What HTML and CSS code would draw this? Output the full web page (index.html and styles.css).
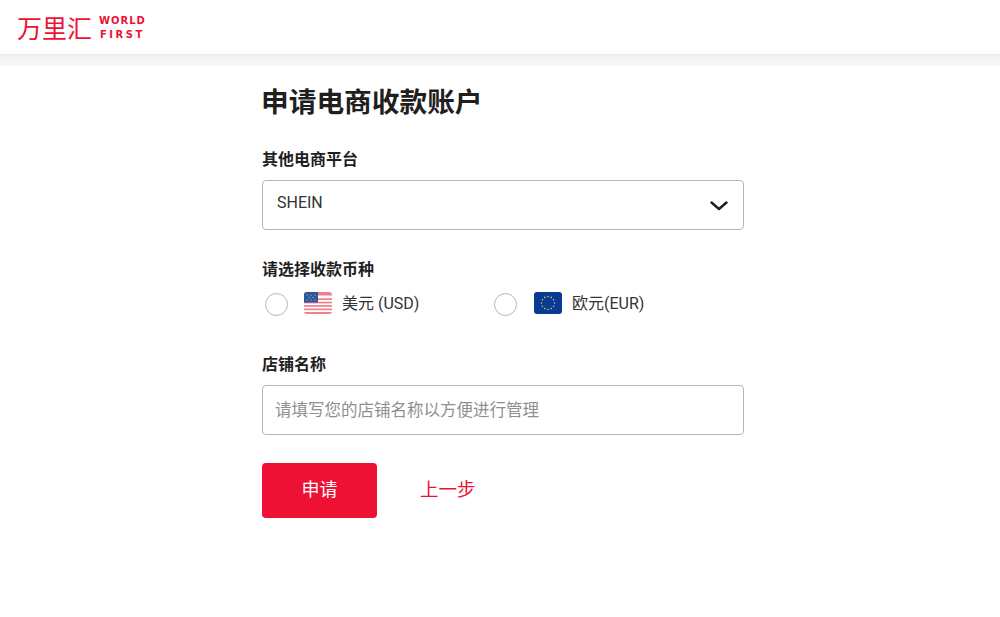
FILE: index.html
```html
<html lang="en">
    <head>
        <meta charset="UTF-8">
        <meta name="viewport" content="width=device-width, initial-scale=1.0">
        <title>万里汇</title>
        <link rel="stylesheet" href="styles.css">
    </head>
    <body>
        <header class="topbar">
            <div class="logo">
                <span class="logo-cn">万里汇</span>
                <div class="logo-en">
                    <div>WORLD</div>
                    <div class="logo-first">FIRST</div>
                </div>
            </div>
        </header>
        <div class="band"></div>
        <main class="content">
            <h1>申请电商收款账户</h1>

            <div class="label first">其他电商平台</div>
            <div class="select">
                <span>SHEIN</span>
                <svg class="chevron" width="18" height="10" viewBox="0 0 18 10">
                    <path d="M1.5 1.5 L9 8 L16.5 1.5" fill="none" stroke="#1f1f1f" stroke-width="2.4" stroke-linecap="round" stroke-linejoin="round"/>
                </svg>
            </div>

            <div class="label currency">请选择收款币种</div>
            <div class="radios">
                <label class="radio usd">
                    <span class="dot"></span>
                    <svg class="flag" width="28" height="22" viewBox="0 0 28 22">
                        <rect width="28" height="22" rx="3" fill="#fff"/>
                        <path d="M0 3 a3 3 0 0 1 3 -3 h22 a3 3 0 0 1 3 3 v0.4 h-28 z" fill="#f07f8b"/>
                        <rect y="6.3" width="28" height="1.7" fill="#f07f8b"/>
                        <rect y="9.7" width="28" height="1.7" fill="#f07f8b"/>
                        <rect y="13.1" width="28" height="1.7" fill="#f07f8b"/>
                        <rect y="16.5" width="28" height="1.7" fill="#f07f8b"/>
                        <path d="M0 19.9 h28 a3 3 0 0 1 -3 2.1 h-22 a3 3 0 0 1 -3 -2.1 z" fill="#f07f8b"/>
                        <path d="M0 3 a3 3 0 0 1 3 -3 h11 v10.5 h-14 z" fill="#2b5797"/>
                        <g fill="#c9d6ea">
                            <circle cx="3" cy="3" r="0.6"/>
                            <circle cx="7" cy="3" r="0.6"/>
                            <circle cx="11" cy="3" r="0.6"/>
                            <circle cx="5" cy="5.5" r="0.6"/>
                            <circle cx="9" cy="5.5" r="0.6"/>
                            <circle cx="3" cy="8" r="0.6"/>
                            <circle cx="7" cy="8" r="0.6"/>
                            <circle cx="11" cy="8" r="0.6"/>
                        </g>
                    </svg>
                    <span>美元 (USD)</span>
                </label>
                <label class="radio eur">
                    <span class="dot"></span>
                    <svg class="flag" width="28" height="22" viewBox="0 0 28 22">
                        <rect width="28" height="22" rx="3" fill="#0a3a94"/>
                        <g fill="#d9c24a">
                            <circle cx="14" cy="4.5" r="0.8"/>
                            <circle cx="17.2" cy="5.4" r="0.8"/>
                            <circle cx="19.6" cy="7.8" r="0.8"/>
                            <circle cx="20.5" cy="11" r="0.8"/>
                            <circle cx="19.6" cy="14.2" r="0.8"/>
                            <circle cx="17.2" cy="16.6" r="0.8"/>
                            <circle cx="14" cy="17.5" r="0.8"/>
                            <circle cx="10.8" cy="16.6" r="0.8"/>
                            <circle cx="8.4" cy="14.2" r="0.8"/>
                            <circle cx="7.5" cy="11" r="0.8"/>
                            <circle cx="8.4" cy="7.8" r="0.8"/>
                            <circle cx="10.8" cy="5.4" r="0.8"/>
                        </g>
                    </svg>
                    <span>欧元(EUR)</span>
                </label>
            </div>

            <div class="label shop">店铺名称</div>
            <input class="text-input" type="text" placeholder="请填写您的店铺名称以方便进行管理">

            <div class="actions">
                <button class="submit">申请</button>
                <a class="back" href="#">上一步</a>
            </div>
        </main>
    </body>
</html>
```

FILE: styles.css
```css
body {
    font-family: Roboto, 'Noto Sans CJK SC', sans-serif;
    margin: 0;
    padding: 0;
    background-color: #ffffff;
    color: #1f1f1f;
}
.topbar {
    height: 54px;
    background-color: #ffffff;
    display: flex;
    align-items: center;
    padding-left: 17px;
}
.logo {
    display: flex;
    align-items: center;
    gap: 7px;
    color: #ee1133;
}
.logo-cn {
    font-family: 'Noto Sans CJK SC', sans-serif;
    font-size: 25px;
    font-weight: 400;
    line-height: 30px;
}
.logo-en {
    font-family: 'DejaVu Sans', sans-serif;
    font-size: 10px;
    font-weight: 700;
    line-height: 14px;
    letter-spacing: 1px;
    margin-top: 2px;
}
.logo-first {
    letter-spacing: 2.5px;
    padding-left: 1px;
}
.band {
    height: 12px;
    background: linear-gradient(#ececec, #f5f5f5 40%, #f6f6f6);
}
.content {
    width: 482px;
    margin-left: 262px;
}
h1 {
    font-size: 27.7px;
    font-weight: 700;
    line-height: 40px;
    margin: 15px 0 0 -1px;
    padding-top: 2px;
    height: 38px;
    color: #1f1f1f;
}
.label {
    font-size: 16px;
    font-weight: 700;
    line-height: 24px;
}
.label.first {
    margin-top: 27px;
    margin-bottom: 8px;
}
.label.currency {
    margin-top: 28px;
}
.label.shop {
    margin-top: 36px;
    margin-bottom: 8px;
}
.select {
    height: 50px;
    box-sizing: border-box;
    border: 1px solid #b5b5b5;
    border-radius: 4px;
    display: flex;
    align-items: center;
    justify-content: space-between;
    padding: 0 15px 0 14px;
    font-size: 16px;
    color: #333333;
}
.select span {
    margin-top: -5px;
}
.chevron {
    margin-top: 1px;
}
.radios {
    display: flex;
    height: 30px;
    margin-top: 5px;
}
.radio {
    display: flex;
    align-items: center;
    font-size: 16px;
    color: #333333;
}
.radio.usd {
    width: 232px;
    padding-left: 3px;
    box-sizing: border-box;
}
.dot {
    width: 23px;
    height: 23px;
    box-sizing: border-box;
    border: 1px solid #b5b5b5;
    border-radius: 50%;
    margin-right: 16px;
    margin-top: 4px;
}
.flag {
    margin-right: 10px;
    margin-top: 2px;
}
.radio.eur .dot {
    margin-right: 17px;
}
.text-input {
    display: block;
    width: 100%;
    height: 50px;
    box-sizing: border-box;
    border: 1px solid #b5b5b5;
    border-radius: 4px;
    padding: 0 12px;
    font-family: Roboto, 'Noto Sans CJK SC', sans-serif;
    font-size: 16.5px;
}
.text-input::placeholder {
    color: #8f8f8f;
    opacity: 1;
}
.actions {
    display: flex;
    align-items: center;
    margin-top: 28px;
}
.submit {
    width: 115px;
    height: 55px;
    border: none;
    border-radius: 4px;
    background-color: #ee1133;
    color: #ffffff;
    font-family: Roboto, 'Noto Sans CJK SC', sans-serif;
    font-size: 18px;
    padding: 0 0 6px;
    cursor: pointer;
}
.back {
    margin-left: 43px;
    margin-top: -6px;
    font-size: 18.5px;
    color: #ee1133;
    text-decoration: none;
}
```
